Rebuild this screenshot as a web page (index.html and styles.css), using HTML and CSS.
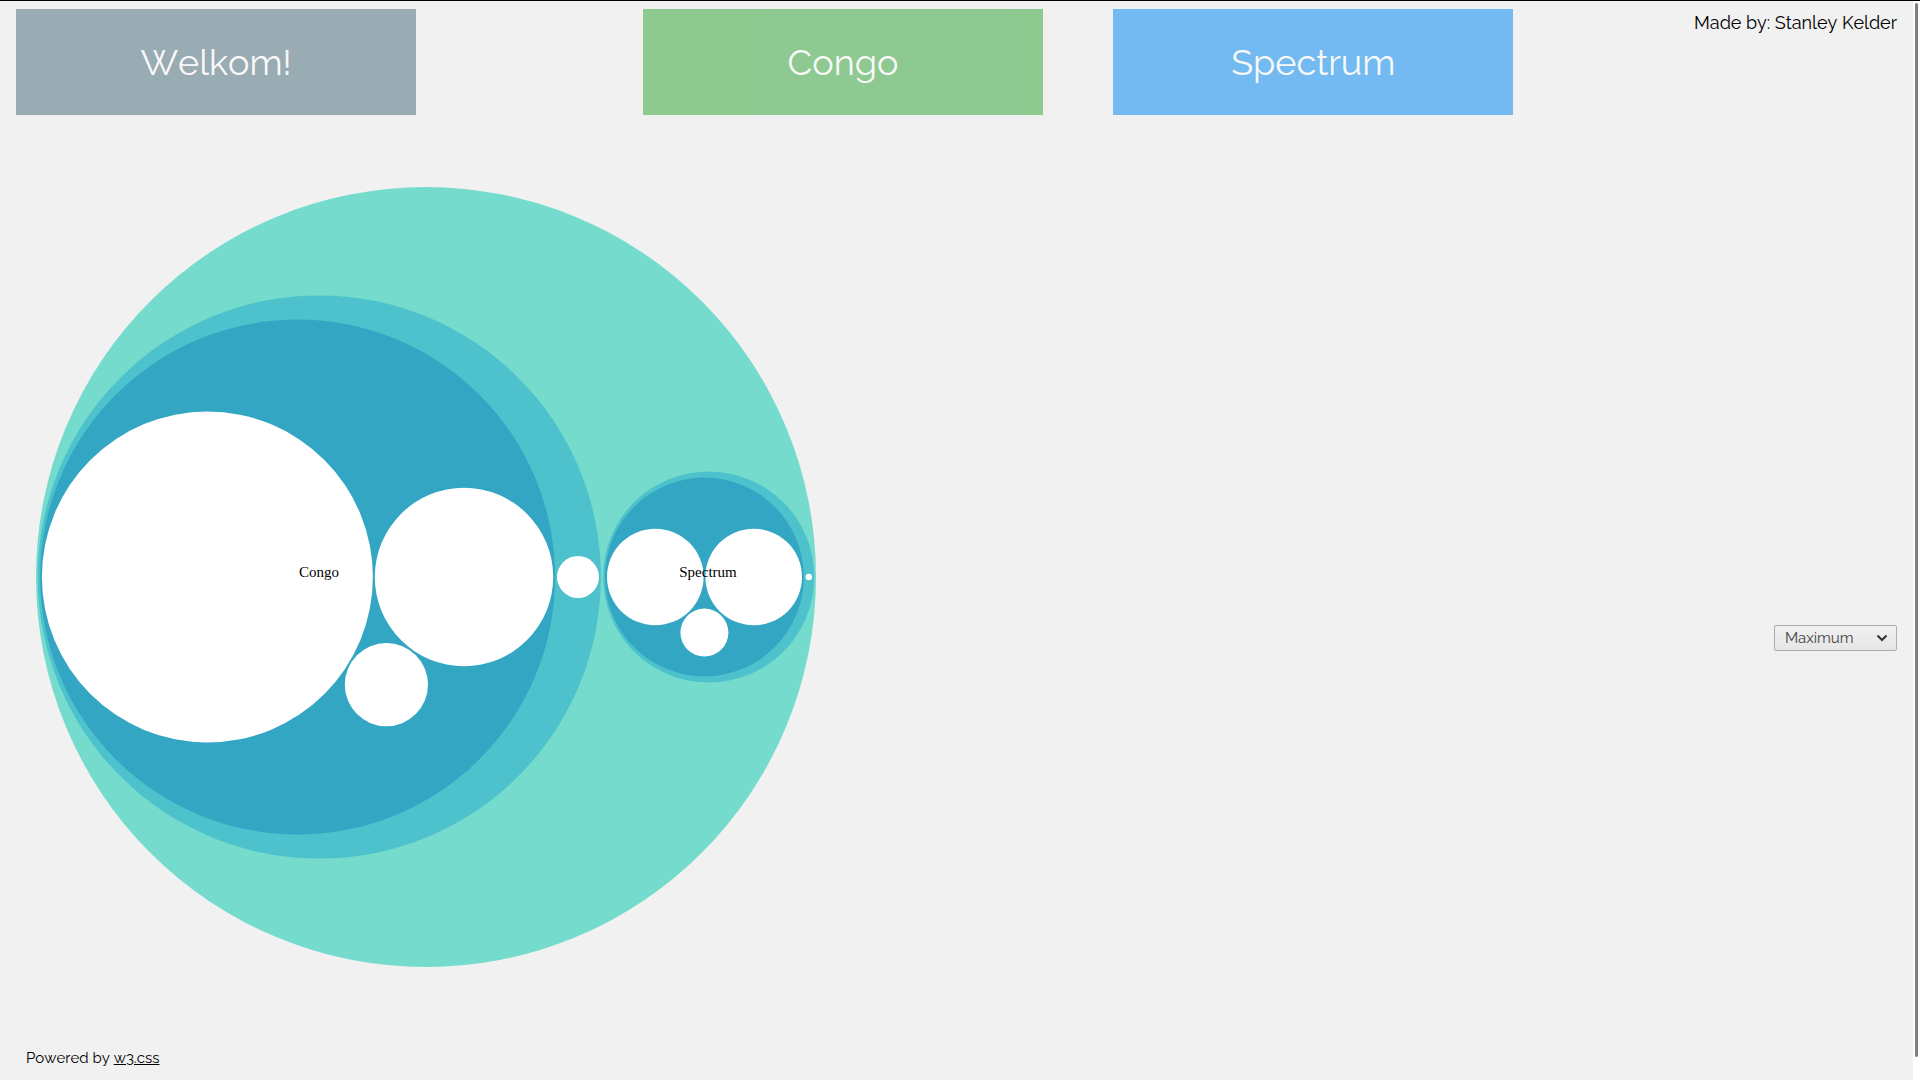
FILE: index.html
```html
<!DOCTYPE html>
<html lang="nl">
<head>
<meta charset="utf-8">
<meta name="viewport" content="width=device-width, initial-scale=1">
<title>Congo en Spectrum</title>
<link rel="stylesheet" href="styles.css">
</head>
<body>
<div class="shell">
  <div class="page">
    <header class="top">
      <h2 class="card card-grey">Welkom!</h2>
      <h2 class="card card-green">Congo</h2>
      <div class="top-end">
        <h2 class="card card-blue">Spectrum</h2>
        <p class="author">Made by: Stanley Kelder</p>
      </div>
    </header>
    <main class="content">
      <svg class="chart" viewBox="26 177 800 800" role="img" aria-label="Congo, Spectrum">
        <circle class="level-1" cx="426" cy="577" r="390"/>
        <circle class="level-2" cx="319.3" cy="577" r="281.6"/>
        <circle class="level-3" cx="297.6" cy="577" r="257.5"/>
        <circle class="leaf" cx="207.4" cy="577" r="165.5"/>
        <circle class="leaf" cx="464" cy="577" r="89.2"/>
        <circle class="leaf" cx="386.4" cy="684.7" r="41.6"/>
        <circle class="leaf" cx="578" cy="577" r="21"/>
        <circle class="level-2" cx="708.7" cy="577" r="105.6"/>
        <circle class="level-3" cx="704.4" cy="577" r="99.4"/>
        <circle class="leaf" cx="655.3" cy="577" r="48.3"/>
        <circle class="leaf" cx="753.7" cy="577" r="48.3"/>
        <circle class="leaf" cx="704.4" cy="632.6" r="24"/>
        <circle class="leaf" cx="808.8" cy="577" r="3.3"/>
        <text class="label" x="319" y="577">Congo</text>
        <text class="label" x="708" y="577">Spectrum</text>
      </svg>
      <select class="measure" aria-label="Waarde">
        <option>Maximum</option>
      </select>
    </main>
    <footer class="foot">Powered by <a href="#">w3.css</a></footer>
  </div>
  <div class="track"><div class="thumb"></div></div>
</div>
</body>
</html>
```
FILE: styles.css
```css
* {
  box-sizing: border-box;
}

body {
  margin: 0;
  background: #f1f1f1;
  color: #000;
  font-family: Raleway, Lato, "Open Sans", sans-serif;
  font-size: 15px;
  line-height: 24px;
  font-kerning: none;
}

.shell {
  display: flex;
  min-height: 100vh;
  border-top: 1px solid #000;
}

.page {
  flex: 1;
  display: flex;
  flex-direction: column;
  padding: 8px 16px;
}

.top {
  display: grid;
  grid-template-columns: 4fr 3fr 5fr;
}

.top-end {
  display: flex;
  justify-content: space-between;
}

.card {
  width: 400px;
  margin: 0;
  padding: 26px 16px;
  font-size: 36px;
  font-weight: 400;
  line-height: 54px;
  text-align: center;
  color: #fff;
  opacity: 0.6;
}

.card-grey {
  background: #607d8b;
}

.card-green {
  background: #4caf50;
}

.card-blue {
  background: #2196f3;
}

.author {
  margin: 0;
  font-size: 18px;
  line-height: 27px;
}

.content {
  display: flex;
  align-items: center;
  justify-content: space-between;
  margin-top: 62px;
  padding-left: 10px;
}

.chart {
  width: 800px;
  height: 800px;
}

.level-1 {
  fill: #75dccd;
}

.level-2 {
  fill: #4ec2cc;
}

.level-3 {
  fill: #33a6c3;
}

.leaf {
  fill: #fff;
}

.label {
  font-family: "Liberation Serif", serif;
  font-size: 15px;
  text-anchor: middle;
}

.measure {
  appearance: none;
  width: 123px;
  height: 26px;
  margin-bottom: -122px;
  padding: 0 10px;
  border: 1px solid #adadad;
  border-radius: 2px;
  color: #444;
  font-family: inherit;
  font-size: 15px;
  background:
    url("data:image/svg+xml,%3Csvg xmlns='http://www.w3.org/2000/svg' width='12' height='8' viewBox='0 0 12 8'%3E%3Cpath d='M1.5 1.5 6 6l4.5-4.5' fill='none' stroke='%23333' stroke-width='2'/%3E%3C/svg%3E") right 8px center no-repeat,
    linear-gradient(#f0f0f0, #e6e6e6);
}

.foot {
  margin-top: 69px;
  padding-left: 10px;
}

.foot a {
  color: inherit;
}

.track {
  width: 7px;
  display: flex;
  padding: 2px 2px 23px;
  background: #fff;
}

.thumb {
  flex: 1;
  border-radius: 2px;
  background: #808080;
}
```
